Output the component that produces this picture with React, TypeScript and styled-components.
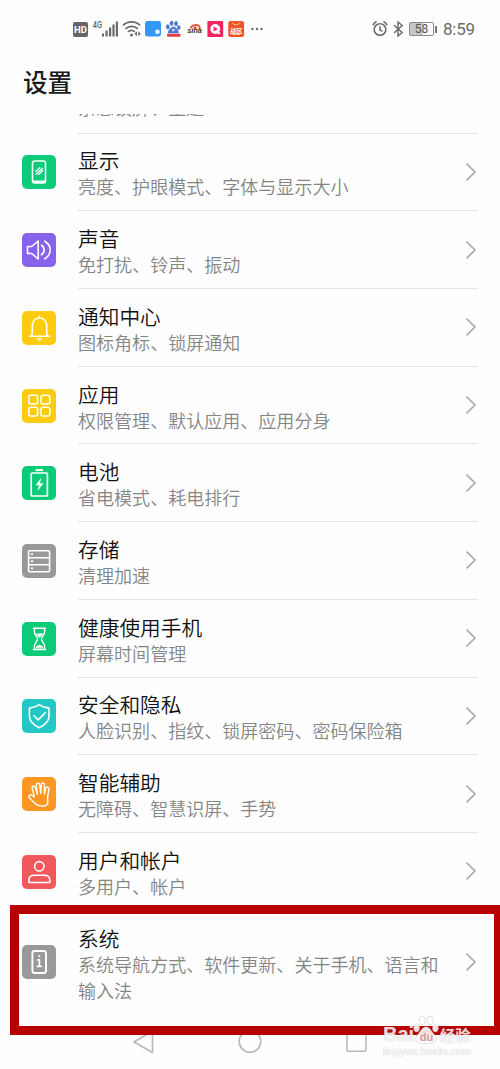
import React from 'react';
import styled, { createGlobalStyle } from 'styled-components';

const GlobalStyle = createGlobalStyle`
  *, *::before, *::after { box-sizing: border-box; }
  body { margin: 0; background: #fefefe; }
`;

const Screen = styled.main`
  position: relative;
  display: flex;
  flex-direction: column;
  width: 500px;
  height: 1069px;
  overflow: hidden;
  background: #fefefe;
  font-family: Roboto, 'Noto Sans CJK SC', sans-serif;
`;

const StatusBar = styled.header`
  display: flex;
  justify-content: space-between;
  align-items: center;
  height: 58px;
  padding: 0 25px 0 73px;
  color: #666;
`;

const StatusGroup = styled.div<{ $gap: number }>`
  display: flex;
  align-items: center;
  gap: ${(p) => p.$gap}px;
`;

const HdBadge = styled.span`
  width: 15px;
  height: 15px;
  border-radius: 2px;
  background: #666;
  color: #fff;
  font: 700 9.5px/15px Roboto, sans-serif;
  text-align: center;
`;

const Battery = styled.span`
  position: relative;
  width: 25px;
  height: 14px;
  border: 1px solid #8a8a8a;
  border-radius: 2px;
  background: linear-gradient(90deg, #c6c6c6 0 58%, #fefefe 58%);
  font: 400 12px/12px Roboto, sans-serif;
  color: #555;
  text-align: center;

  &::after {
    content: '';
    position: absolute;
    right: -4px;
    top: 3px;
    width: 2px;
    height: 7px;
    background: #777;
  }
`;

const Clock = styled.time`
  font-size: 17px;
  line-height: 20px;
  color: #6a6a6a;
  margin-left: 4px;
  width: 32px;
  white-space: nowrap;
  letter-spacing: -0.25px;
`;

const PageTitle = styled.h1`
  height: 56px;
  margin: 0;
  padding: 8px 0 0 23px;
  font-size: 24.6px;
  line-height: 36px;
  font-weight: 500;
  color: #1a1a1a;
`;

const List = styled.ul`
  flex: 1;
  min-height: 0;
  overflow: hidden;
  margin: 0;
  padding: 0;
  list-style: none;
`;

const ScrolledRow = styled.li`
  display: flex;
  align-items: flex-end;
  height: 19.5px;
  margin: 0 22px 0 78px;
  padding-bottom: 10px;
  border-bottom: 1px solid #e4e4e4;
`;

const Row = styled.li<{ $tall?: boolean }>`
  display: flex;
  align-items: center;
  height: ${(p) => (p.$tall ? 103 : 77.72)}px;
  padding: 0 22px;
`;

const RowBody = styled.div<{ $last?: boolean }>`
  display: flex;
  flex: 1;
  align-items: center;
  justify-content: space-between;
  height: 100%;
  margin-left: 22px;
  border-bottom: ${(p) => (p.$last ? 'none' : '1px solid #e4e4e4')};
`;

const RowText = styled.div`
  padding-top: 7.4px;
`;

const IconTile = styled.span<{ $color: string }>`
  width: 34px;
  height: 34px;
  border-radius: 5px;
  background: ${(p) => p.$color};

  svg { display: block; }
`;

const Label = styled.div`
  font-size: 20.7px;
  line-height: 26px;
  font-weight: 350;
  color: #111;
  white-space: nowrap;
`;

const Detail = styled.div`
  max-width: 365px;
  font-size: 18.04px;
  line-height: 26.2px;
  font-weight: 350;
  color: #858585;
`;

const NavBar = styled.nav`
  display: flex;
  justify-content: space-between;
  height: 54px;
  padding: 14px 132px 0;
`;

const Highlight = styled.div`
  position: absolute;
  left: 10px;
  top: 905px;
  width: 490px;
  height: 130px;
  border: 9px solid #b90000;
  border-right-width: 6px;
`;

const Watermark = styled.div`
  position: absolute;
  left: 383px;
  top: 1015px;
  width: 92px;
  color: rgba(255, 255, 255, 0.8);
  text-shadow: 0 0 1px rgba(150, 150, 150, 0.6);
`;

const Brand = styled.div`
  display: flex;
  align-items: flex-end;
  height: 30px;
`;

const BrandLatin = styled.span`
  width: 30px;
  font: 700 20px/21px 'Liberation Sans', sans-serif;
  white-space: nowrap;
`;

const BrandCn = styled.span`
  margin-left: 1px;
  font: 700 15.2px/21px 'Noto Sans CJK SC', sans-serif;
  white-space: nowrap;
`;

const Site = styled.div`
  font: 400 10.9px/12px 'Liberation Sans', sans-serif;
  color: #fff;
  text-shadow: 0 0 1px rgba(150, 150, 150, 0.8);
`;

type Entry = { label: string; detail: string; color: string; icon: React.ReactNode };

const entries: Entry[] = [
  {
    label: '显示', detail: '亮度、护眼模式、字体与显示大小', color: '#0bcb78',
    icon: (
      <>
        <rect x="10.5" y="6" width="13" height="22" rx="2.2" />
        <path d="M11.5 26.6h11" strokeWidth="2.2" />
        <path d="M13.8 16.4l4-3.7M14 19.3l6.6-6M16.6 19.5l4-3.7" strokeWidth="1.3" />
      </>
    ),
  },
  {
    label: '声音', detail: '免打扰、铃声、振动', color: '#8663ea',
    icon: (
      <>
        <path d="M5.5 13.5h4.2l6.5-5.5v18l-6.5-5.5H5.5z" />
        <path d="M19.5 12.3c3.5 2.2 3.5 7.2 0 9.4M22.8 8.2c7.2 4.3 7.2 13.3 0 17.6" />
      </>
    ),
  },
  {
    label: '通知中心', detail: '图标角标、锁屏通知', color: '#fdcb10',
    icon: (
      <>
        <path d="M7.5 25.3h20M9.3 25c1-1.2 1-2.5 1-5.5v-4.2c0-5.2 3-8.3 7.2-8.3s7.2 3.1 7.2 8.3v4.2c0 3 0 4.3 1 5.5M17.5 5.2v1.6" />
        <path d="M15.3 27.8h4.4c-.7 1.8-3.7 1.8-4.4 0z" fill="#fff" strokeWidth=".7" />
      </>
    ),
  },
  {
    label: '应用', detail: '权限管理、默认应用、应用分身', color: '#fdcb10',
    icon: (
      <>
        <rect x="6.8" y="6.2" width="8.8" height="8.8" rx="2" />
        <rect x="19" y="6.2" width="8.8" height="8.8" rx="2" />
        <rect x="6.8" y="18.2" width="8.8" height="8.8" rx="2" />
        <rect x="19" y="18.2" width="8.8" height="8.8" rx="2" />
      </>
    ),
  },
  {
    label: '电池', detail: '省电模式、耗电排行', color: '#0bcb78',
    icon: (
      <>
        <rect x="9.2" y="7" width="16.2" height="23" rx="1" strokeWidth="1.7" />
        <path d="M13.5 4.1h7.5" strokeWidth="2" strokeLinecap="butt" />
        <path d="M18.6 12.7l-4.5 6.4h3.2l-1.3 5 5-6.7h-3.1z" fill="#fff" strokeWidth=".5" />
      </>
    ),
  },
  {
    label: '存储', detail: '清理加速', color: '#999',
    icon: (
      <>
        <rect x="6.6" y="6.8" width="21" height="21" rx="1" />
        <path d="M7 13.7h20M7 20.7h20" />
        <path d="M9.8 10.3h.4M9.8 17.2h.4M9.8 24.2h.4" strokeWidth="1.9" />
      </>
    ),
  },
  {
    label: '健康使用手机', detail: '屏幕时间管理', color: '#0bcb78',
    icon: (
      <>
        <path d="M11.5 6.3h12M11.5 27.5h12M12.4 7v3c0 3 3.2 4.6 3.2 7s-3.2 4-3.2 7v3M22.6 7v3c0 3-3.2 4.6-3.2 7s3.2 4 3.2 7v3" strokeWidth="1.4" />
        <path d="M14 11.8c2 .8 5-.8 7 0l-3.5 3.7zM14 25.7c.2-1.3 1.5-2 3.5-2.6 2 .6 3.3 1.3 3.5 2.6z" fill="#fff" strokeWidth=".5" />
      </>
    ),
  },
  {
    label: '安全和隐私', detail: '人脸识别、指纹、锁屏密码、密码保险箱', color: '#22c8c6',
    icon: (
      <>
        <path d="M17.2 5.5c2.8 2.4 5.8 3.3 9.8 3.6v8c0 5.3-3.9 8.8-9.8 11.6-5.9-2.8-9.8-6.3-9.8-11.6v-8c4-.3 7-1.2 9.8-3.6z" />
        <path d="M12 16.7l4.2 4.2 7-7.2" />
      </>
    ),
  },
  {
    label: '智能辅助', detail: '无障碍、智慧识屏、手势', color: '#fd9724',
    icon: (
      <path
        d="M12.4 19.8L10.2 11.200c-.5-2.200 2.200-3 2.900-.8l2.300 6.600-1.100-8.700c-.2-2.500 2.900-2.800 3.300-.3l1.100 8.400.5-8.700c.2-2.400 3.300-2.200 3.200.2l-.1 9.200 1.500-5.700c.7-2.200 3.500-1.500 3.100.7l-1.300 8.300.2 4.200c.2 3-1.700 4.400-4.700 4.400-4.200 0-6.400-1-8.500-3.100l-5.200-4.800c-1.700-1.800.4-3.900 2.200-2.900z"
        strokeWidth="1.4"
      />
    ),
  },
  {
    label: '用户和帐户', detail: '多用户、帐户', color: '#f1585b',
    icon: (
      <>
        <circle cx="17.3" cy="11.3" r="4.7" />
        <path d="M6.8 27.5v-2.2c0-3.5 2.4-5 5.6-5h9.8c3.2 0 5.6 1.5 5.6 5v2.2z" />
      </>
    ),
  },
  {
    label: '系统', detail: '系统导航方式、软件更新、关于手机、语言和输入法', color: '#999',
    icon: (
      <>
        <rect x="10.4" y="6" width="13.6" height="22" rx="2.2" strokeWidth="1.9" />
        <path d="M15.7 14.8h1.7v6.3M15.4 21.3h3.9M17 11.2h.6" strokeWidth="1.7" />
      </>
    ),
  },
];

const Chevron = () => (
  <svg width="12" height="20" viewBox="0 0 12 20" fill="none" stroke="#aaa" strokeWidth="1.7">
    <path d="M.5 1.6L8.9 10 .5 18.4" />
  </svg>
);

const StatusIcons = () => (
  <svg width="178" height="22" viewBox="90 18 178 22">
    <text x="92.8" y="27.5" fontFamily="Roboto" fontSize="8.5" fontWeight="500" fill="#666" textLength="9.2" lengthAdjust="spacingAndGlyphs">4G</text>
    <g fill="#6a6a6a">
      <rect x="102" y="33.5" width="2" height="3" />
      <rect x="105.5" y="30.5" width="2.2" height="6" />
      <rect x="109" y="27.5" width="2.2" height="9" />
      <rect x="112.4" y="24.5" width="2.2" height="12" />
      <rect x="115.8" y="21.5" width="2.2" height="15" />
      <path d="M137 31.2v5l-2.6-2.5zM138.2 31.2v5l2.6-2.5z" />
      <circle cx="131.5" cy="35" r="1.5" />
      <circle cx="252.5" cy="29" r="1.2" />
      <circle cx="257" cy="29" r="1.2" />
      <circle cx="261.5" cy="29" r="1.2" />
    </g>
    <g fill="none" stroke="#6a6a6a" strokeWidth="1.7">
      <path d="M123 25.4c5-4.6 12.5-4.6 17 0M125.5 28.8c3.6-3.3 9-3.3 12.3 0M128 31.9c2-1.9 4.8-1.9 6.8 0" />
    </g>
    <rect x="145" y="21" width="16" height="15.5" rx="2.4" fill="#3399f4" />
    <circle cx="157.5" cy="31.8" r="2.2" fill="#fff" />
    <g fill="#4b78d6">
      <ellipse cx="167.8" cy="26.8" rx="1.8" ry="2.5" />
      <ellipse cx="171.6" cy="23.3" rx="1.8" ry="2.5" />
      <ellipse cx="176" cy="23.6" rx="1.8" ry="2.5" />
      <ellipse cx="178.8" cy="27.6" rx="1.7" ry="2.4" />
      <path d="M173.4 26.5c2.4 0 5.4 4 5.4 6.8h-11c0-2.8 3.2-6.8 5.6-6.8z" />
    </g>
    <path d="M171.5 30h3.6M173.3 28.5v3" stroke="#dce7fa" />
    <rect x="167" y="33.8" width="13.5" height="3" rx="1" fill="#e0404d" />
    <path d="M190.5 28.5c.5-3.6 7.5-5 9.2-1.6.5 1.2-.2 2.2-1.2 2.6" fill="none" stroke="#d9543c" strokeWidth="1.7" />
    <circle cx="195.2" cy="27.8" r="1.6" fill="#d9543c" />
    <text x="187.3" y="33.4" fontFamily="Liberation Sans" fontSize="7.5" fontStyle="italic" fontWeight="700" fill="#463532" textLength="14.5">sina</text>
    <rect x="207.4" y="21" width="15.8" height="16" rx="1" fill="#f1245d" />
    <circle cx="215.2" cy="29" r="4.9" fill="#fff" />
    <path d="M213.6 26.4v5.2l4.2-2.6z" fill="#f1245d" />
    <path d="M217.5 32.5l2.5 1.2" stroke="#fff" strokeWidth="2" />
    <rect x="228.3" y="21" width="15.8" height="16" rx="2.5" fill="#ef5524" />
    <path d="M232.5 22.5c1 3 6.5 3 7.5 0" fill="none" stroke="#fbc1a4" />
    <text x="230" y="32.8" fontFamily="Noto Sans CJK SC" fontSize="6.2" fontWeight="700" fill="#fff">战区</text>
    <path d="M232.5 34.5h7.5" stroke="#ffc6a9" />
  </svg>
);

const AlarmBluetooth = () => (
  <svg width="34" height="20" viewBox="370 19 34 20" fill="none" stroke="#6a6a6a" strokeWidth="1.6">
    <circle cx="380" cy="29.5" r="5.8" />
    <path d="M380 26.2v3.7l2.5 1.5M373 25.2c.6-1.8 1.8-3 3.6-3.8M387 25.2c-.6-1.8-1.8-3-3.6-3.8" />
    <path d="M394 25.2l8.2 7.3-4.2 3.6V22l4.2 3.5-8.2 7.4" strokeWidth="1.4" />
  </svg>
);

const Paw = () => (
  <svg width="26" height="30" viewBox="0 0 26 30" fill="rgba(255,255,255,.88)" stroke="rgba(150,150,150,.4)" strokeWidth=".7">
    <ellipse cx="3.6" cy="13" rx="3" ry="4" />
    <ellipse cx="9.2" cy="5.5" rx="3" ry="4.2" />
    <ellipse cx="17" cy="5.5" rx="3" ry="4.2" />
    <ellipse cx="22.4" cy="13" rx="3" ry="4" />
    <path d="M13 11.8c4 0 5 4.2 8 7.2 4 4.2 2 9.4-2.3 9.4H7.3c-4.3 0-6.3-5.2-2.3-9.4 3-3 4-7.2 8-7.2z" />
    <text x="6.8" y="26" fontFamily="Liberation Sans" fontSize="11" fontWeight="700" fill="#dba0a0" stroke="none">du</text>
  </svg>
);

export default function App() {
  return (
    <Screen>
      <GlobalStyle />
      <StatusBar>
        <StatusGroup $gap={2}>
          <HdBadge>HD</HdBadge>
          <StatusIcons />
        </StatusGroup>
        <StatusGroup $gap={5}>
          <AlarmBluetooth />
          <Battery>58</Battery>
          <Clock>8:59</Clock>
        </StatusGroup>
      </StatusBar>
      <PageTitle>设置</PageTitle>
      <List>
        <ScrolledRow>
          <Detail>杂志锁屏、主题</Detail>
        </ScrolledRow>
        {entries.map((entry, i) => {
          const last = i === entries.length - 1;
          return (
            <Row key={entry.label} $tall={last}>
              <IconTile $color={entry.color}>
                <svg width="34" height="34" viewBox="0 0 34 34" fill="none" stroke="#fff" strokeWidth="1.6" strokeLinecap="round" strokeLinejoin="round">
                  {entry.icon}
                </svg>
              </IconTile>
              <RowBody $last={last}>
                <RowText>
                  <Label>{entry.label}</Label>
                  <Detail>{entry.detail}</Detail>
                </RowText>
                <Chevron />
              </RowBody>
            </Row>
          );
        })}
      </List>
      <NavBar>
        <svg width="22" height="26" viewBox="0 0 22 26" fill="none" stroke="#b8b8b8" strokeWidth="1.6" strokeLinejoin="round">
          <path d="M20.5 2v21.5L2 13z" />
        </svg>
        <svg width="26" height="26" viewBox="0 0 26 26" fill="none" stroke="#b8b8b8" strokeWidth="1.6">
          <circle cx="13" cy="12.5" r="10.8" />
        </svg>
        <svg width="22" height="26" viewBox="0 0 22 26" fill="none" stroke="#b8b8b8" strokeWidth="1.6">
          <rect x="1" y="3" width="19" height="19.3" rx="1" />
        </svg>
      </NavBar>
      <Highlight />
      <Watermark>
        <Brand>
          <BrandLatin>Bai</BrandLatin>
          <Paw />
          <BrandCn>经验</BrandCn>
        </Brand>
        <Site>jingyan.baidu.com</Site>
      </Watermark>
    </Screen>
  );
}
